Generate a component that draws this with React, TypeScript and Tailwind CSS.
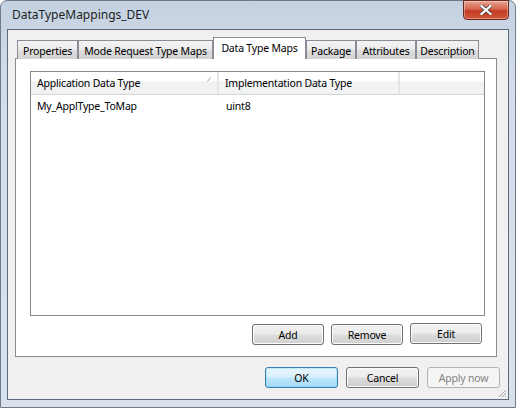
import React from "react"

const font = { fontFamily: '"Noto Sans", "Open Sans", sans-serif' }

const tabs = [
    { label: "Properties", w: "w-[61px]" },
    { label: "Mode Request Type Maps", w: "w-[135px]" },
    { label: "Data Type Maps", w: "w-[93px]", active: true },
    { label: "Package", w: "w-[50px]" },
    { label: "Attributes", w: "w-[60px]" },
    { label: "Description", w: "w-[63px]" },
]

const txt = "text-[10.5px] tracking-[-0.2px]"

function WinButton({ label, className = "" }: { label: string; className?: string }) {
    return (
        <button className={`w-[72px] h-[21px] rounded-[3px] border border-[#707070] bg-[linear-gradient(#f2f2f2_0%,#ebebeb_48%,#dddddd_52%,#cfcfcf_100%)] ${txt} leading-none text-black shadow-[inset_0_0_0_1px_#fcfcfc] whitespace-nowrap pt-px ${className}`}>
            {label}
        </button>
    )
}

export default function App() {
    return (
        <div style={font} className="w-[516px] h-[408px] bg-white">
            <div className="relative w-[516px] h-[408px] rounded-t-[7px] border border-[#6f7b8a] bg-[linear-gradient(#c4d1e1_0%,#d3dde9_20%,#d8e1ec_100%)] flex flex-col">
                {/* Title bar */}
                <div className="h-[28px] flex items-center pl-[11px] text-[12px] text-[#1e1e1e] whitespace-nowrap">
                    DataTypeMappings_DEV
                </div>
                <div className="absolute top-[-1px] right-[6px] w-[46px] h-[20px] rounded-b-[4px] border border-[#6b2a20] bg-[linear-gradient(#e8a493_0%,#d7644c_45%,#c23a22_55%,#d1583a_100%)] flex items-center justify-center shadow-[inset_0_0_0_1px_rgba(255,255,255,0.35)]">
                    <svg width="12" height="10" viewBox="0 0 12 10">
                        <path d="M1.5 1 L10.5 9 M10.5 1 L1.5 9" stroke="#3a3a3a" strokeWidth="3.6" strokeLinecap="square" />
                        <path d="M1.5 1 L10.5 9 M10.5 1 L1.5 9" stroke="#ffffff" strokeWidth="2.2" strokeLinecap="square" />
                    </svg>
                </div>

                {/* Client area */}
                <div className="ml-[6px] w-[502px] h-[371px] border border-[#5d6b7d] bg-[#f0f0f0] flex flex-col">
                    {/* Tab strip */}
                    <div className="mt-[7px] ml-[9px] h-[22px] flex items-end relative z-10">
                        {tabs.map(t =>
                            t.active ? (
                                <div key={t.label} className={`${t.w} h-[22px] border border-b-0 border-[#898c95] bg-white flex justify-center pt-[3px] ${txt} leading-[14px] text-black whitespace-nowrap`}>
                                    {t.label}
                                </div>
                            ) : (
                                <div key={t.label} className={`${t.w} h-[19px] border border-b-0 border-[#898c95] bg-[linear-gradient(#f3f3f3_0%,#ebebeb_50%,#dddddd_52%,#d3d3d3_100%)] flex items-center justify-center pt-[2px] ${txt} text-black leading-none whitespace-nowrap`}>
                                    {t.label}
                                </div>
                            )
                        )}
                    </div>

                    {/* Tab panel */}
                    <div className="-mt-px ml-[7px] w-[482px] h-[301px] border border-[#898c95] bg-white flex flex-col">
                        <div className="mt-[12px] ml-[14px] w-[455px] h-[245px] border border-[#828790] bg-white">
                            <div className={`flex h-[23px] border-b border-[#d5d5d5] bg-[linear-gradient(#ffffff_0%,#ffffff_40%,#f1f2f4_45%,#f1f2f4_100%)] ${txt} text-black`}>
                                <div className="relative w-[188px] border-r-2 border-[#e4e5e7] pl-[6px] pt-[2px] flex items-center whitespace-nowrap">
                                    Application Data Type
                                    <svg className="absolute right-[6px] top-[5px]" width="4" height="5" viewBox="0 0 4 5">
                                        <path d="M0.5 4.5 L3.5 0.5" stroke="#a0a0a0" strokeWidth="1" />
                                    </svg>
                                </div>
                                <div className="w-[181px] border-r-2 border-[#e4e5e7] pl-[6px] pt-[2px] flex items-center whitespace-nowrap">
                                    Implementation Data Type
                                </div>
                                <div className="flex-1" />
                            </div>
                            <div className={`flex h-[22px] pt-[2px] items-center ${txt} text-black`}>
                                <div className="w-[189px] pl-[6px]">My_ApplType_ToMap</div>
                                <div className="pl-[6px]">uint8</div>
                            </div>
                        </div>
                        <div className="mt-[8px] mr-[14px] flex justify-end gap-[7px]">
                            <WinButton label="Add" />
                            <WinButton label="Remove" />
                            <WinButton label="Edit" className="-mt-px" />
                        </div>
                    </div>

                    {/* Dialog buttons */}
                    <div className="mt-[10px] mr-[8px] flex justify-end gap-[8px]">
                        <button className={`w-[73px] h-[21px] rounded-[3px] border border-[#3c7fb1] bg-[linear-gradient(#eaf6fd_0%,#d9f0fc_48%,#bee6fd_52%,#a7d9f5_100%)] ${txt} leading-none text-black pt-px shadow-[inset_0_0_0_1px_#48d4fd40]`}>
                            OK
                        </button>
                        <WinButton label="Cancel" className="w-[73px]" />
                        <button className={`w-[73px] h-[21px] rounded-[3px] border border-[#adb2b5] bg-[#f4f4f4] ${txt} leading-none pt-px text-[#838383] whitespace-nowrap`}>
                            Apply now
                        </button>
                    </div>
                    <div className="flex-1 flex justify-end items-end">
                        <svg width="10" height="10" viewBox="0 0 10 10" className="mb-px mr-px">
                            <path d="M9 2 L2 9 M9 5 L5 9 M9 8 L8 9" stroke="#a9a9a9" strokeWidth="1" />
                        </svg>
                    </div>
                </div>
            </div>
        </div>
    )
}
